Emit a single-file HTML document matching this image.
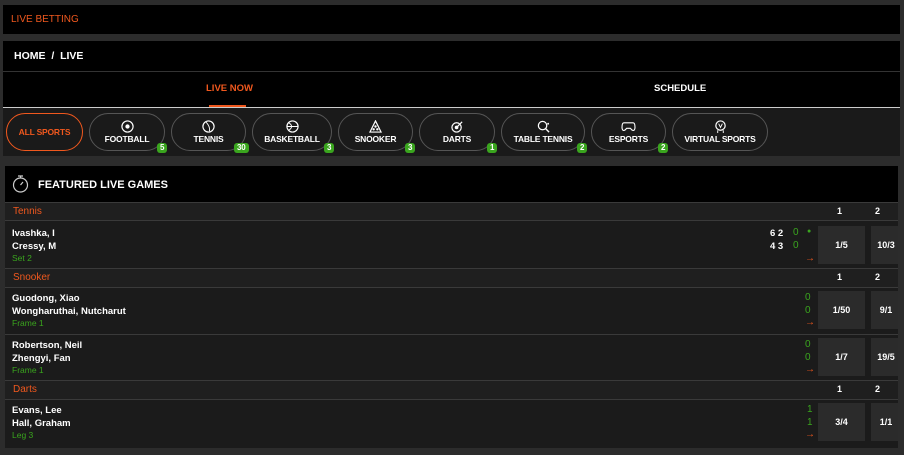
<!DOCTYPE html>
<html><head><style>
*{margin:0;padding:0;box-sizing:border-box}
body{width:904px;height:455px;background:#2c2c2c;font-family:"Liberation Sans",sans-serif;font-weight:bold;color:#fff;position:relative;overflow:hidden;font-size:10px}
.a{position:absolute}
.pill{position:absolute;top:113px;height:38px;border:1px solid #555;border-radius:19px;text-align:center;font-size:8.5px;color:#fff;letter-spacing:-0.2px}
.pill svg{display:block;margin:6px auto 1px}
.pill span{display:block}
.bd{position:absolute;bottom:-3px;background:#3aa51e;color:#fff;font-size:8px;height:10px;line-height:10px;padding:0 3px;border-radius:3px}
.sh{position:absolute;left:5px;width:893px;background:#1f1f1f;border-top:1px solid #3a3a3a;border-bottom:1px solid #3a3a3a;color:#f0581e;font-size:10px;font-weight:normal;padding-left:8px}
.n{position:absolute;left:7px;font-size:9.5px}
.st{position:absolute;left:7px;font-size:8.5px;color:#3aa51e;font-weight:normal}
.od{position:absolute;width:47px;background:#2b2b2b;text-align:center;font-size:9px}
.g{color:#3aa51e;font-weight:normal}
.ar{position:absolute;left:805px;color:#f0581e;font-size:10px;font-weight:bold}
</style></head><body>
<div class="a" style="left:3px;top:5px;width:897px;height:29px;background:#000"></div>
<div class="a" style="left:11px;top:14px;color:#f0581e;font-size:10px;font-weight:normal">LIVE BETTING</div>
<div class="a" style="left:3px;top:41px;width:897px;height:66px;background:#000"></div>
<div class="a" style="left:3px;top:71px;width:897px;height:1px;background:#333"></div>
<div class="a" style="left:14px;top:50px;font-size:10.5px">HOME &nbsp;/&nbsp; LIVE</div>
<div class="a" style="left:206px;top:83px;color:#f0581e;font-size:9.5px">LIVE NOW</div>
<div class="a" style="left:654px;top:83px;font-size:9.5px">SCHEDULE</div>
<div class="a" style="left:3px;top:107px;width:897px;height:1px;background:#ccc"></div>
<div class="a" style="left:209px;top:105px;width:37px;height:2px;background:#f0581e"></div>
<div class="a" style="left:3px;top:108px;width:897px;height:48px;background:#1a1a1a"></div>

<div class="pill" style="left:6px;width:77px;border-color:#f0581e;color:#f0581e;line-height:36px">ALL SPORTS</div>
<div class="pill" style="left:89px;width:76px"><svg width="13" height="13" viewBox="0 0 14 14"><circle cx="7" cy="7" r="6" fill="none" stroke="#fff" stroke-width="1.3"/><circle cx="7" cy="7" r="2.3" fill="#fff"/></svg><span>FOOTBALL</span><div class="bd" style="left:67px">5</div></div>
<div class="pill" style="left:171px;width:75px"><svg width="13" height="13" viewBox="0 0 14 14"><circle cx="7" cy="7" r="6" fill="none" stroke="#fff" stroke-width="1.3"/><path d="M4 2Q9 7 8 12" fill="none" stroke="#fff"/></svg><span>TENNIS</span><div class="bd" style="left:62px">30</div></div>
<div class="pill" style="left:252px;width:80px"><svg width="13" height="13" viewBox="0 0 14 14"><circle cx="7" cy="7" r="6" fill="none" stroke="#fff" stroke-width="1.3"/><path d="M1 7H13M3 3Q9 7 3 11" fill="none" stroke="#fff"/></svg><span>BASKETBALL</span><div class="bd" style="left:71px">3</div></div>
<div class="pill" style="left:338px;width:75px"><svg width="13" height="13" viewBox="0 0 14 14"><path d="M7 1L13 13H1Z" fill="none" stroke="#fff" stroke-width="1.3"/><circle cx="7" cy="7" r="1.3" fill="#fff"/><circle cx="5" cy="10" r="1.3" fill="#fff"/><circle cx="9" cy="10" r="1.3" fill="#fff"/></svg><span>SNOOKER</span><div class="bd" style="left:66px">3</div></div>
<div class="pill" style="left:419px;width:76px"><svg width="13" height="13" viewBox="0 0 14 14"><circle cx="6" cy="8" r="5" fill="none" stroke="#fff" stroke-width="1.3"/><circle cx="6" cy="8" r="2" fill="#fff"/><path d="M6 8L12 2" stroke="#fff" stroke-width="1.3"/></svg><span>DARTS</span><div class="bd" style="left:67px">1</div></div>
<div class="pill" style="left:501px;width:84px"><svg width="13" height="13" viewBox="0 0 14 14"><circle cx="6" cy="6" r="4.5" fill="none" stroke="#fff" stroke-width="1.3"/><path d="M9 9L13 13" stroke="#fff" stroke-width="1.5"/><circle cx="12" cy="4" r="1" fill="#fff"/></svg><span>TABLE TENNIS</span><div class="bd" style="left:75px">2</div></div>
<div class="pill" style="left:591px;width:75px"><svg width="15" height="13" viewBox="0 0 16 14"><path d="M3 3H13Q15 3 15 8Q15 12 12 11L10 9H6L4 11Q1 12 1 8Q1 3 3 3Z" fill="none" stroke="#fff" stroke-width="1.2"/></svg><span>ESPORTS</span><div class="bd" style="left:66px">2</div></div>
<div class="pill" style="left:672px;width:96px"><svg width="13" height="13" viewBox="0 0 14 14"><circle cx="7" cy="6" r="5" fill="none" stroke="#fff" stroke-width="1.3"/><path d="M5 4L7 8L9 4M4 11L4 14M10 11L10 14" fill="none" stroke="#fff"/></svg><span>VIRTUAL SPORTS</span></div>

<div class="a" style="left:5px;top:166px;width:893px;height:282px;background:#1b1b1b"></div>
<div class="a" style="left:5px;top:166px;width:893px;height:36px;background:#000"></div>
<svg class="a" style="left:12px;top:175px" width="17" height="18" viewBox="0 0 17 18"><circle cx="8.5" cy="10" r="7" fill="none" stroke="#ccc" stroke-width="1.2"/><path d="M6 1H11M8.5 1V3M8.5 10L11 7" stroke="#ccc" stroke-width="1.2" fill="none"/></svg>
<div class="a" style="left:38px;top:179px;font-size:11px">FEATURED LIVE GAMES</div>

<div class="sh" style="top:202px;height:19px;line-height:17px">Tennis</div>
<div class="a" style="left:837px;top:206px;font-size:9px">1</div><div class="a" style="left:875px;top:206px;font-size:9px">2</div>
<div class="n" style="top:228px;left:12px">Ivashka, I</div>
<div class="n" style="top:241px;left:12px">Cressy, M</div>
<div class="st" style="top:253px;left:12px">Set 2</div>
<div class="a" style="left:770px;top:228px;font-size:9.5px">6 2</div><div class="a g" style="left:793px;top:227px;font-size:10px">0</div><div class="a g" style="left:807px;top:228px;font-size:7px">●</div>
<div class="a" style="left:770px;top:241px;font-size:9.5px">4 3</div><div class="a g" style="left:793px;top:240px;font-size:10px">0</div>
<div class="ar" style="top:253px">→</div>
<div class="od" style="left:818px;top:226px;height:38px;line-height:38px">1/5</div>
<div class="od" style="left:871px;top:226px;height:38px;line-height:38px;width:27px;padding-left:3px">10/3</div>

<div class="sh" style="top:268px;height:20px;line-height:18px">Snooker</div>
<div class="a" style="left:837px;top:272px;font-size:9px">1</div><div class="a" style="left:875px;top:272px;font-size:9px">2</div>
<div class="n" style="top:293px;left:12px">Guodong, Xiao</div>
<div class="n" style="top:306px;left:12px">Wongharuthai, Nutcharut</div>
<div class="st" style="top:318px;left:12px">Frame 1</div>
<div class="a g" style="left:805px;top:292px;font-size:10px">0</div>
<div class="a g" style="left:805px;top:305px;font-size:10px">0</div>
<div class="ar" style="top:317px">→</div>
<div class="od" style="left:818px;top:291px;height:38px;line-height:38px">1/50</div>
<div class="od" style="left:871px;top:291px;height:38px;line-height:38px;width:27px;padding-left:3px">9/1</div>
<div class="a" style="left:5px;top:334px;width:893px;height:1px;background:#3a3a3a"></div>
<div class="n" style="top:340px;left:12px">Robertson, Neil</div>
<div class="n" style="top:353px;left:12px">Zhengyi, Fan</div>
<div class="st" style="top:365px;left:12px">Frame 1</div>
<div class="a g" style="left:805px;top:339px;font-size:10px">0</div>
<div class="a g" style="left:805px;top:352px;font-size:10px">0</div>
<div class="ar" style="top:364px">→</div>
<div class="od" style="left:818px;top:338px;height:38px;line-height:38px">1/7</div>
<div class="od" style="left:871px;top:338px;height:38px;line-height:38px;width:27px;padding-left:3px">19/5</div>

<div class="sh" style="top:380px;height:20px;line-height:18px">Darts</div>
<div class="a" style="left:837px;top:384px;font-size:9px">1</div><div class="a" style="left:875px;top:384px;font-size:9px">2</div>
<div class="n" style="top:405px;left:12px">Evans, Lee</div>
<div class="n" style="top:418px;left:12px">Hall, Graham</div>
<div class="st" style="top:430px;left:12px">Leg 3</div>
<div class="a g" style="left:807px;top:404px;font-size:10px">1</div>
<div class="a g" style="left:807px;top:417px;font-size:10px">1</div>
<div class="ar" style="top:429px">→</div>
<div class="od" style="left:818px;top:403px;height:38px;line-height:38px">3/4</div>
<div class="od" style="left:871px;top:403px;height:38px;line-height:38px;width:27px;padding-left:3px">1/1</div>
</body></html>
